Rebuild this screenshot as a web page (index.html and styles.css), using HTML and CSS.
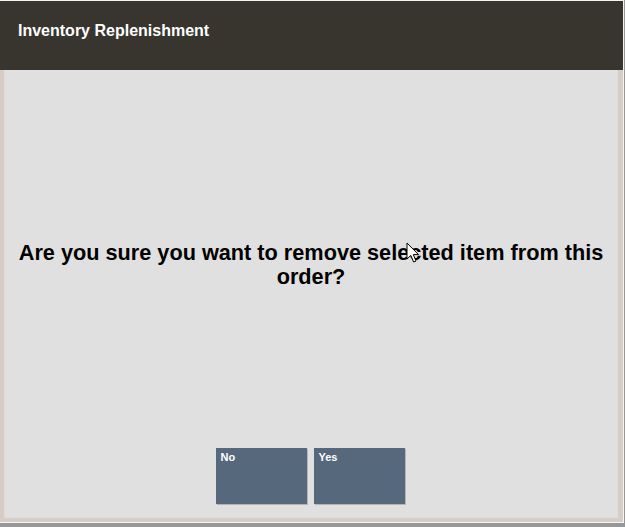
FILE: index.html
```html
<!DOCTYPE html>
<html>
<head>
<meta charset="utf-8">
<link rel="stylesheet" href="styles.css">
</head>
<body>
<div class="screen">
  <div class="window">
    <div class="header">Inventory Replenishment</div>
    <div class="content">
      <div class="question">Are you sure you want to remove selected item from this order?</div>
      <div class="buttons">
        <div class="btn">No</div>
        <div class="btn">Yes</div>
      </div>
      <svg class="cursor" width="14" height="22" viewBox="0 0 14 22">
        <path d="M1 1 L1 17 L4.8 13.4 L7.6 20 L10 19 L7.3 12.6 L12.5 12.6 Z" fill="#fff" stroke="#000" stroke-width="1" stroke-linejoin="miter"/>
      </svg>
    </div>
  </div>
</div>
</body>
</html>
```

FILE: styles.css
```css
html, body {
  margin: 0;
  padding: 0;
}
body {
  width: 625px;
  height: 527px;
  overflow: hidden;
  background: #979797;
  font-family: "Liberation Sans", Arial, sans-serif;
}
.screen {
  width: 625px;
  height: 527px;
  background: #979797;
}
.window {
  width: 623px;
  height: 521px;
  border-top: 1px solid #f4f4f4;
  border-right: 1px solid #f4f4f4;
  border-bottom: 1px solid #f4f4f4;
  display: flex;
  flex-direction: column;
}
.header {
  height: 69px;
  flex: none;
  background: #38352f;
  color: #ffffff;
  font-weight: bold;
  font-size: 16px;
  line-height: 18px;
  padding-left: 18px;
  padding-top: 21px;
  box-sizing: border-box;
}
.content {
  position: relative;
  flex: 1;
  background: #e0e0e0;
  border-left: 4px solid #d6cdc6;
  border-right: 5px solid #d6cdc6;
  border-bottom: 4px solid #d6cdc6;
  box-shadow: inset 1px 0 0 #e3dcd6, inset -1px -1px 0 #e3dcd6;
  display: flex;
  flex-direction: column;
  align-items: center;
  padding-top: 171px;
  box-sizing: border-box;
}
.question {
  width: 604px;
  text-align: center;
  font-weight: bold;
  font-size: 21.7px;
  line-height: 24px;
  color: #000000;
}
.buttons {
  display: flex;
  gap: 7px;
  margin-top: 159px;
  margin-right: 2px;
}
.btn {
  width: 91px;
  height: 56px;
  background: #56687c;
  color: #ffffff;
  font-weight: bold;
  font-size: 11px;
  line-height: 13px;
  padding: 3px 5px;
  box-sizing: border-box;
  box-shadow: 1px 1px 0 #b4b4b4;
}
.cursor {
  position: absolute;
  left: 402px;
  top: 172px;
}
```
